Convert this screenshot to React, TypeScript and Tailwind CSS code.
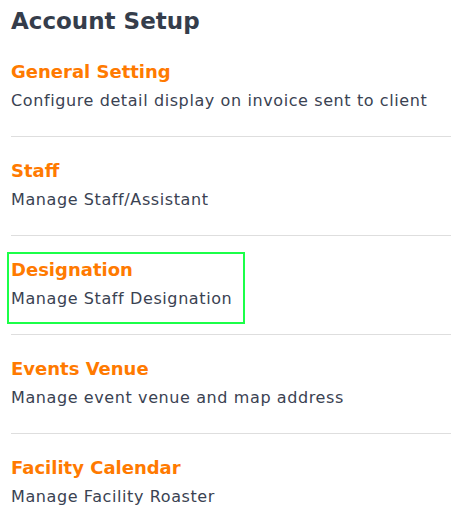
import React from "react";

const items = [
  { title: "General Setting", desc: "Configure detail display on invoice sent to client" },
  { title: "Staff", desc: "Manage Staff/Assistant" },
  { title: "Designation", desc: "Manage Staff Designation", highlight: true },
  { title: "Events Venue", desc: "Manage event venue and map address" },
  { title: "Facility Calendar", desc: "Manage Facility Roaster" },
];

function Content({ title, desc }: { title: string; desc: string }) {
  return (
    <>
      <div className="text-[18px] font-bold leading-[27px] text-[#ff7a00] whitespace-nowrap">{title}</div>
      <div className="text-[16px] leading-[32px] tracking-[0.6px] text-[#3a4252] whitespace-nowrap">{desc}</div>
    </>
  );
}

export default function App() {
  return (
    <div
      className="w-[451px] h-[517px] bg-white pl-[11px] overflow-hidden"
      style={{ fontFamily: "'DejaVu Sans', 'Noto Sans', sans-serif" }}
    >
      <h1 className="pt-[5px] text-[23px] font-bold leading-[33px] text-[#353d4b]">Account Setup</h1>
      <div>
        {items.map((it, i) => (
          <div
            key={it.title}
            className={`pt-[20px] pb-[19px] ${i < items.length - 1 ? "border-b border-[#dedede]" : ""}`}
          >
            {it.highlight ? (
              <div className="-ml-[4px] -mt-[4px] -mb-[9px] w-[238px] border-2 border-[#1bff48] pl-[2px] pt-[2px] pb-[7px]">
                <Content title={it.title} desc={it.desc} />
              </div>
            ) : (
              <Content title={it.title} desc={it.desc} />
            )}
          </div>
        ))}
      </div>
    </div>
  );
}
